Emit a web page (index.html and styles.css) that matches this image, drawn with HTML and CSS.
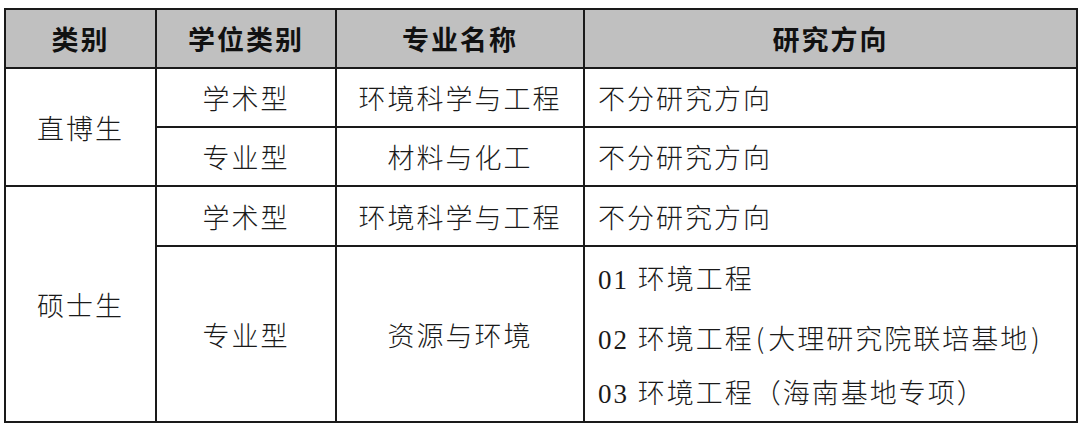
FILE: index.html
```html
<!DOCTYPE html>
<html lang="zh-CN">
<head>
<meta charset="utf-8">
<link rel="stylesheet" href="styles.css">
</head>
<body>
<table class="grid">
  <colgroup>
    <col class="c1"><col class="c2"><col class="c3"><col class="c4">
  </colgroup>
  <thead>
    <tr class="head">
      <th>类别</th>
      <th>学位类别</th>
      <th>专业名称</th>
      <th>研究方向</th>
    </tr>
  </thead>
  <tbody>
    <tr class="r">
      <td rowspan="2">直博生</td>
      <td>学术型</td>
      <td>环境科学与工程</td>
      <td class="dir">不分研究方向</td>
    </tr>
    <tr class="r">
      <td>专业型</td>
      <td>材料与化工</td>
      <td class="dir">不分研究方向</td>
    </tr>
    <tr class="r r3">
      <td rowspan="2">硕士生</td>
      <td>学术型</td>
      <td>环境科学与工程</td>
      <td class="dir">不分研究方向</td>
    </tr>
    <tr class="tall">
      <td>专业型</td>
      <td>资源与环境</td>
      <td class="dir list">
        <div class="line">01 环境工程</div>
        <div class="line">02 环境工程<span class="paren">(</span>大理研究院联培基地<span class="paren">)</span></div>
        <div class="line last">03 环境工程（海南基地专项）</div>
      </td>
    </tr>
  </tbody>
</table>
</body>
</html>
```

FILE: styles.css
```css
html, body {
  margin: 0;
  padding: 0;
  background: #ffffff;
}

.grid {
  margin: 8px 0 0 4px;
  width: 1072px;
  border-collapse: collapse;
  table-layout: fixed;
  color: #1a1a1a;
  font-family: "Liberation Serif", "Noto Sans CJK SC", serif;
  font-size: 27px;
  font-weight: 300;
  letter-spacing: 2px;
}

.c1 { width: 151px; }
.c2 { width: 180px; }
.c3 { width: 248px; }
.c4 { width: 493px; }

.grid th,
.grid td {
  border: 2px solid #1a1a1a;
  padding: 0;
  text-align: center;
  vertical-align: middle;
}

.grid td {
  font-weight: 300;
}

.grid th {
  background: #c0c0c0;
  color: #111111;
  font-family: "Noto Sans CJK SC", sans-serif;
  font-weight: 700;
  font-size: 27px;
  letter-spacing: 2px;
}

.head { height: 59px; }
.r { height: 59px; }
.r3 { height: 60px; }
.tall { height: 175px; }

.grid td.dir {
  text-align: left;
  padding-left: 13px;
}

.grid td.list {
  padding-top: 4px;
}

.line {
  height: 58px;
  line-height: 58px;
  white-space: nowrap;
}

.line.last {
  height: 54px;
  line-height: 54px;
}

.paren {
  font-family: "Noto Sans CJK SC", sans-serif;
  padding: 0 2px;
}
```
